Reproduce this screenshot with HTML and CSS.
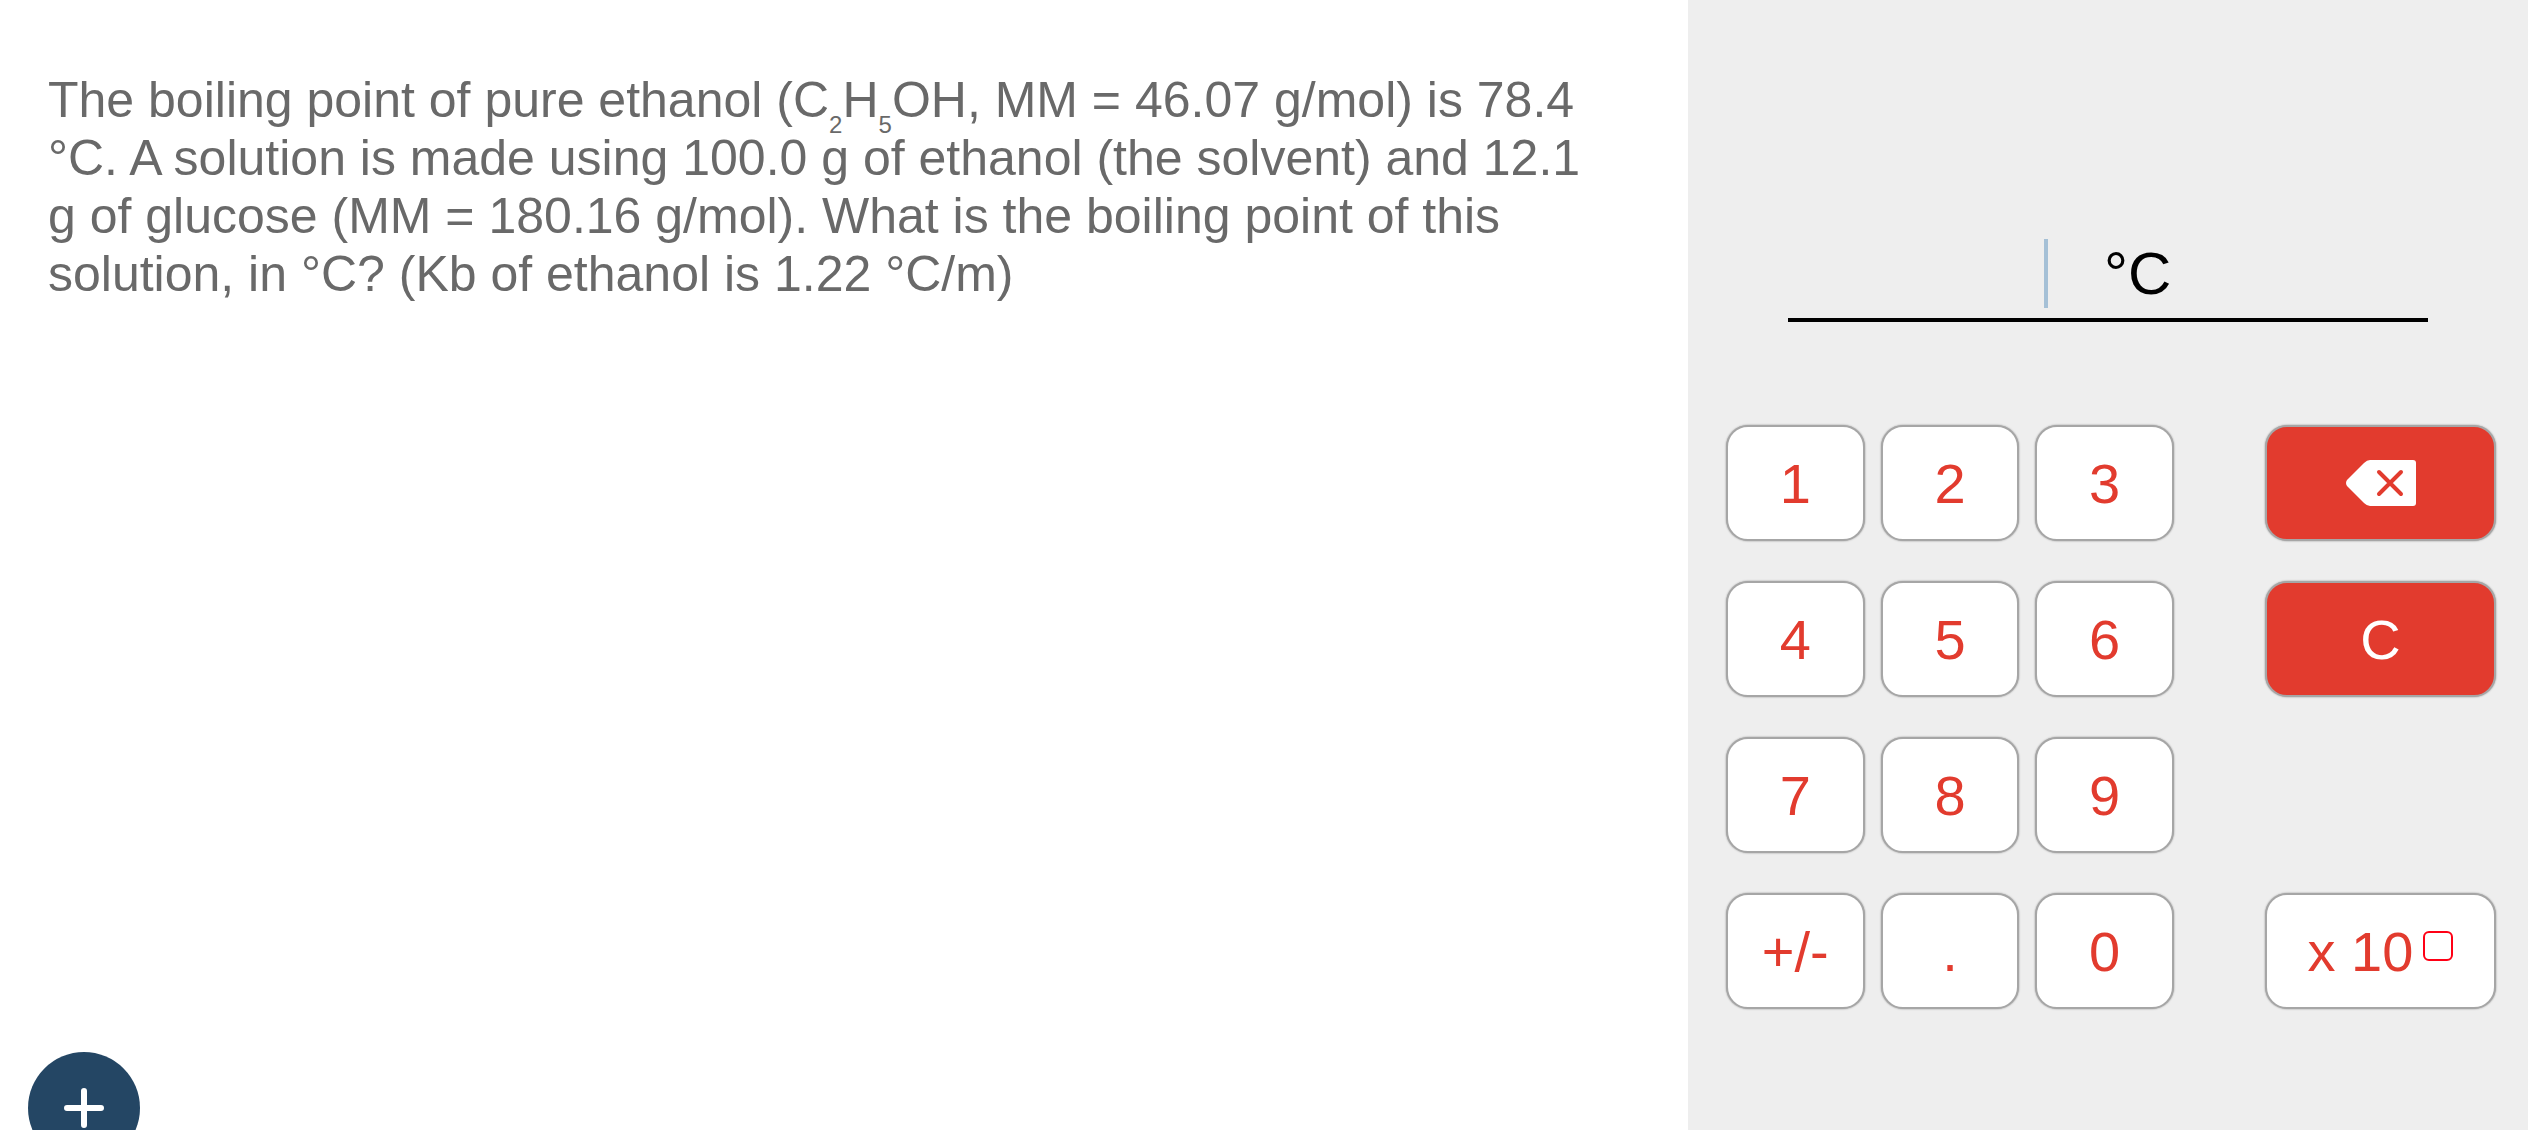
FILE: index.html
```
<!DOCTYPE html>
<html lang="en">

<head>
    <meta charset="UTF-8">
    <meta name="viewport" content="width=device-width, initial-scale=1.0">
    <title>Boiling point</title>
    <link rel="stylesheet" href="styles.css">
</head>

<body>
    <main class="page">
        <section class="question">
            <p class="question-text">The boiling point of pure ethanol (C<sub>2</sub>H<sub>5</sub>OH, MM = 46.07 g/mol) is 78.4 °C. A solution is made using 100.0 g of ethanol (the solvent) and 12.1 g of glucose (MM = 180.16 g/mol). What is the boiling point of this solution, in °C? (Kb of ethanol is 1.22 °C/m)</p>
        </section>

        <section class="panel">
            <div class="answer">
                <input class="answer-input" id="answer" type="text" inputmode="none" aria-label="Answer">
                <label class="answer-unit" for="answer">°C</label>
            </div>

            <div class="keypad">
                <div class="digits">
                    <button class="key" type="button">1</button>
                    <button class="key" type="button">2</button>
                    <button class="key" type="button">3</button>
                    <button class="key" type="button">4</button>
                    <button class="key" type="button">5</button>
                    <button class="key" type="button">6</button>
                    <button class="key" type="button">7</button>
                    <button class="key" type="button">8</button>
                    <button class="key" type="button">9</button>
                    <button class="key" type="button">+/-</button>
                    <button class="key" type="button">.</button>
                    <button class="key" type="button">0</button>
                </div>
                <div class="actions">
                    <button class="key key-red" type="button" aria-label="Backspace">
                        <svg width="70" height="46" viewBox="0 0 70 46">
                            <path d="M24 0H67Q70 0 70 3V43Q70 46 67 46H24Q21 46 18 43L1 26Q-1 23 1 20L18 3Q21 0 24 0Z" fill="#fff" />
                            <path d="M33 12L55 34M55 12L33 34" fill="none" stroke="#e23b2e" stroke-width="4" stroke-linecap="round" />
                        </svg>
                    </button>
                    <button class="key key-red" type="button">C</button>
                    <button class="key key-exp" type="button">x 10<span class="exp-box"></span></button>
                </div>
            </div>
        </section>
    </main>

    <button class="add" type="button" aria-label="Add">
        <svg width="40" height="40" viewBox="0 0 40 40">
            <path d="M20 3V37M3 20H37" fill="none" stroke="#fff" stroke-width="6" stroke-linecap="round" />
        </svg>
    </button>
</body>

</html>
```
FILE: styles.css
```
* {
    margin: 0;
    padding: 0;
    box-sizing: border-box;
}

body {
    background-color: #fff;
    font-family: Arial, "Liberation Sans", sans-serif;
}

.page {
    display: grid;
    grid-template-columns: minmax(0, 211fr) minmax(0, 105fr);
    min-height: 100vh;
}

.question {
    padding: 71px 96px 0 48px;
}

.question-text {
    color: #696969;
    font-size: 50px;
    line-height: 58px;
}

.question-text sub {
    font-size: 24px;
    line-height: 0;
    vertical-align: -16px;
}

.panel {
    background-color: #eee;
    padding: 239px 32px 0 38px;
}

/* answer line */
.answer {
    display: grid;
    grid-template-columns: minmax(0, 13fr) minmax(0, 19fr);
    margin: 0 68px 103px 62px;
    padding-bottom: 10px;
    border-bottom: 4px solid #000;
}

.answer-input {
    width: 100%;
    height: 69px;
    border: none;
    border-right: 4px solid #a5c0d6;
    background: none;
    font-family: inherit;
    font-size: 60px;
    text-align: right;
    outline: none;
}

.answer-unit {
    padding-left: 56px;
    color: #000;
    font-size: 60px;
    line-height: 69px;
}

/* keys */
.keypad {
    display: grid;
    grid-template-columns: 64fr 33fr;
    column-gap: 91px;
}

.digits,
.actions {
    display: grid;
    grid-template-rows: repeat(4, 116px);
    gap: 40px 16px;
}

.digits {
    grid-template-columns: repeat(3, 1fr);
}

.key {
    display: flex;
    align-items: center;
    justify-content: center;
    border: 2px solid #a6a6a6;
    border-radius: 22px;
    background-color: #fff;
    box-shadow: 0 0 2px rgba(0, 0, 0, 0.4);
    color: #e23b2e;
    font-family: inherit;
    font-size: 56px;
    cursor: pointer;
}

.key-red {
    background-color: #e23b2e;
    color: #fff;
}

.key-exp {
    grid-row: 4;
    gap: 10px;
}

.exp-box {
    width: 30px;
    height: 30px;
    margin-bottom: 10px;
    border: 2px solid #ff0015;
    border-radius: 6px;
}

/* floating button, runs off the bottom edge */
.add {
    position: fixed;
    left: 28px;
    bottom: -34px;
    display: flex;
    align-items: center;
    justify-content: center;
    width: 112px;
    height: 112px;
    border: none;
    border-radius: 50%;
    background-color: #244664;
    cursor: pointer;
}
```
